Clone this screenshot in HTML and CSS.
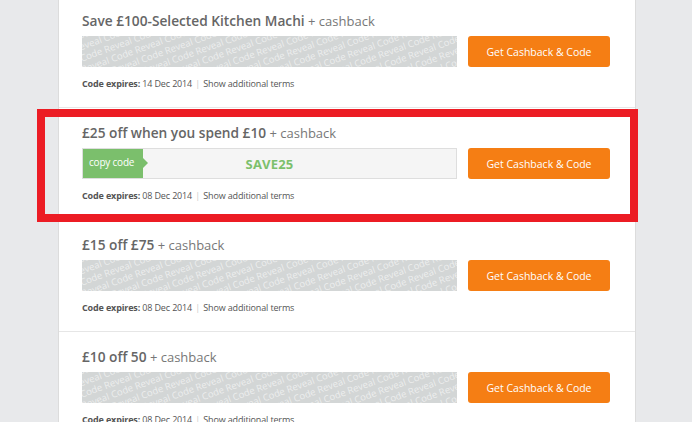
FILE: index.html
```html
<!DOCTYPE html>
<html lang="en">
<head>
<meta charset="utf-8">
<title>Voucher codes</title>
<link rel="stylesheet" href="styles.css">
</head>
<body>
<div class="panel">
  <div class="offer">
    <h3 class="title"><strong>Save £100-Selected Kitchen Machi</strong> + cashback</h3>
    <div class="actions">
      <div class="code hidden-code">
        <svg class="reveal" width="375" height="31" aria-hidden="true">
          <defs>
            <text id="rl1" class="rv-text">Reveal Code Reveal Code Reveal Code Reveal Code Reveal Code Reveal Code Reveal Code Reveal Code Reveal Code</text>
          </defs>
          <g transform="rotate(-20 0 31)">
            <use href="#rl1" x="-30" y="4"/><use href="#rl1" x="-58" y="15"/>
            <use href="#rl1" x="-30" y="26"/><use href="#rl1" x="-58" y="37"/>
            <use href="#rl1" x="-30" y="48"/><use href="#rl1" x="-58" y="59"/>
            <use href="#rl1" x="-30" y="70"/><use href="#rl1" x="-58" y="81"/>
            <use href="#rl1" x="-30" y="92"/><use href="#rl1" x="-58" y="103"/>
            <use href="#rl1" x="-30" y="114"/><use href="#rl1" x="-58" y="125"/>
            <use href="#rl1" x="-30" y="136"/><use href="#rl1" x="-58" y="147"/>
            <use href="#rl1" x="-30" y="158"/><use href="#rl1" x="-58" y="169"/>
            <use href="#rl1" x="-30" y="180"/>
          </g>
        </svg>
      </div>
      <button class="btn">Get Cashback &amp; Code</button>
    </div>
    <p class="meta"><b>Code expires:</b> 14 Dec 2014 <span class="sep">|</span> Show additional terms</p>
  </div>

  <div class="offer highlighted">
    <h3 class="title"><strong>£25 off when you spend £10</strong> + cashback</h3>
    <div class="actions">
      <div class="code open-code">
        <span class="copy-label">copy code</span>
        <span class="code-text">SAVE25</span>
      </div>
      <button class="btn">Get Cashback &amp; Code</button>
    </div>
    <p class="meta"><b>Code expires:</b> 08 Dec 2014 <span class="sep">|</span> Show additional terms</p>
    <div class="mark"></div>
  </div>

  <div class="offer">
    <h3 class="title"><strong>£15 off £75</strong> + cashback</h3>
    <div class="actions">
      <div class="code hidden-code">
        <svg class="reveal" width="375" height="31" aria-hidden="true">
          <defs>
            <text id="rl3" class="rv-text">Reveal Code Reveal Code Reveal Code Reveal Code Reveal Code Reveal Code Reveal Code Reveal Code Reveal Code</text>
          </defs>
          <g transform="rotate(-20 0 31)">
            <use href="#rl3" x="-30" y="4"/><use href="#rl3" x="-58" y="15"/>
            <use href="#rl3" x="-30" y="26"/><use href="#rl3" x="-58" y="37"/>
            <use href="#rl3" x="-30" y="48"/><use href="#rl3" x="-58" y="59"/>
            <use href="#rl3" x="-30" y="70"/><use href="#rl3" x="-58" y="81"/>
            <use href="#rl3" x="-30" y="92"/><use href="#rl3" x="-58" y="103"/>
            <use href="#rl3" x="-30" y="114"/><use href="#rl3" x="-58" y="125"/>
            <use href="#rl3" x="-30" y="136"/><use href="#rl3" x="-58" y="147"/>
            <use href="#rl3" x="-30" y="158"/><use href="#rl3" x="-58" y="169"/>
            <use href="#rl3" x="-30" y="180"/>
          </g>
        </svg>
      </div>
      <button class="btn">Get Cashback &amp; Code</button>
    </div>
    <p class="meta"><b>Code expires:</b> 08 Dec 2014 <span class="sep">|</span> Show additional terms</p>
  </div>

  <div class="offer">
    <h3 class="title"><strong>£10 off 50</strong> + cashback</h3>
    <div class="actions">
      <div class="code hidden-code">
        <svg class="reveal" width="375" height="31" aria-hidden="true">
          <defs>
            <text id="rl4" class="rv-text">Reveal Code Reveal Code Reveal Code Reveal Code Reveal Code Reveal Code Reveal Code Reveal Code Reveal Code</text>
          </defs>
          <g transform="rotate(-20 0 31)">
            <use href="#rl4" x="-30" y="4"/><use href="#rl4" x="-58" y="15"/>
            <use href="#rl4" x="-30" y="26"/><use href="#rl4" x="-58" y="37"/>
            <use href="#rl4" x="-30" y="48"/><use href="#rl4" x="-58" y="59"/>
            <use href="#rl4" x="-30" y="70"/><use href="#rl4" x="-58" y="81"/>
            <use href="#rl4" x="-30" y="92"/><use href="#rl4" x="-58" y="103"/>
            <use href="#rl4" x="-30" y="114"/><use href="#rl4" x="-58" y="125"/>
            <use href="#rl4" x="-30" y="136"/><use href="#rl4" x="-58" y="147"/>
            <use href="#rl4" x="-30" y="158"/><use href="#rl4" x="-58" y="169"/>
            <use href="#rl4" x="-30" y="180"/>
          </g>
        </svg>
      </div>
      <button class="btn">Get Cashback &amp; Code</button>
    </div>
    <p class="meta"><b>Code expires:</b> 08 Dec 2014 <span class="sep">|</span> Show additional terms</p>
  </div>
</div>
</body>
</html>
```
FILE: styles.css
```css
html, body {
  margin: 0;
  padding: 0;
}
body {
  background: #e8e9eb;
  font-family: "Open Sans", "Liberation Sans", sans-serif;
  overflow: hidden;
  height: 422px;
}
.panel {
  margin: -4px 0 0 58px;
  width: 576px;
  background: #fff;
  border-left: 1px solid #dcdcdc;
  border-right: 1px solid #dcdcdc;
}
.offer {
  position: relative;
  padding: 15px 25px 16px 23px;
  border-bottom: 1px solid #e6e6e6;
}
.title {
  margin: 0;
  font-size: 13px;
  line-height: 20px;
  font-weight: 400;
  color: #777;
  white-space: nowrap;
}
.title strong {
  font-size: 13.7px;
  font-weight: 600;
  color: #666;
}
.actions {
  display: flex;
  gap: 11px;
  margin-top: 5px;
}
.code {
  width: 375px;
  height: 31px;
  box-sizing: border-box;
  overflow: hidden;
  flex: none;
}
.hidden-code {
  background: #d3d6d6;
}
.reveal {
  display: block;
}
.rv-text {
  font-family: "Open Sans", "Liberation Sans", sans-serif;
  font-size: 9.5px;
  fill: #ffffff;
  fill-opacity: 0.6;
}
.open-code {
  position: relative;
  display: flex;
  align-items: center;
  justify-content: center;
  background: #f5f5f5;
  border: 1px solid #dedede;
}
.copy-label {
  position: absolute;
  left: -1px;
  top: -1px;
  height: 31px;
  width: 61px;
  background: #7bbf6c;
  color: #fff;
  font-size: 10px;
  line-height: 29px;
  padding-left: 7px;
  box-sizing: border-box;
  letter-spacing: -0.2px;
}
.copy-label::after {
  content: "";
  position: absolute;
  right: -5px;
  top: 10px;
  border-top: 5px solid transparent;
  border-bottom: 5px solid transparent;
  border-left: 5px solid #7bbf6c;
}
.code-text {
  font-size: 13px;
  font-weight: 700;
  color: #7cc06c;
  letter-spacing: 0.2px;
}
.btn {
  width: 142px;
  height: 31px;
  border: 0;
  border-radius: 3px;
  background: #f57e14;
  color: #fff;
  font-family: "Open Sans", "Liberation Sans", sans-serif;
  font-size: 10.5px;
  padding: 0;
  cursor: pointer;
  flex: none;
}
.meta {
  margin: 10px 0 0;
  font-size: 9px;
  line-height: 14px;
  letter-spacing: -0.15px;
  color: #555;
  white-space: nowrap;
}
.meta b {
  font-weight: 700;
  color: #555;
}
.sep {
  color: #ccc;
  margin: 0 1px;
}
.mark {
  position: absolute;
  left: -22px;
  top: 1px;
  width: 601px;
  height: 113px;
  box-sizing: border-box;
  border: 8px solid #ec1c24;
  pointer-events: none;
}
```
